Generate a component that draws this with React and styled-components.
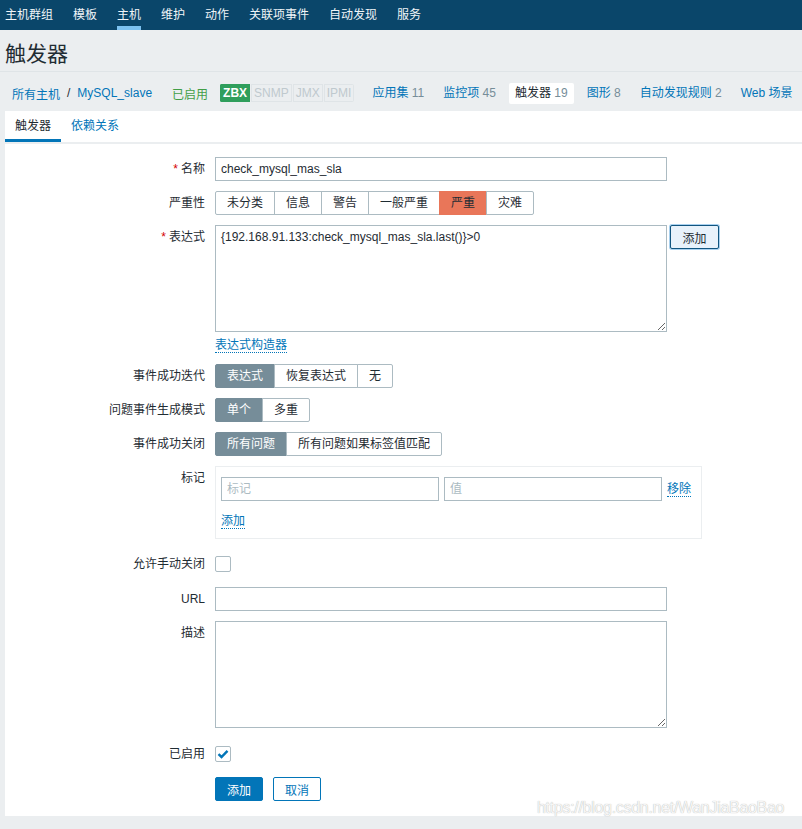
import React from "react";
import styled, { createGlobalStyle } from "styled-components";

const GlobalStyle = createGlobalStyle`
  html, body {
    margin: 0;
    padding: 0;
    background: #ebeef0;
  }
  body {
    font-family: "Liberation Sans", Arial, "Noto Sans CJK SC", sans-serif;
    font-size: 12px;
    color: #1f2c33;
  }
  * { box-sizing: border-box; }
`;

const Page = styled.div`
  position: relative;
  min-height: 829px;
  overflow: hidden;
`;

const TopNav = styled.nav`
  display: flex;
  gap: 20px;
  height: 30px;
  padding-left: 5px;
  background: #0a466a;
`;

const NavItem = styled.a`
  position: relative;
  line-height: 30px;
  color: #f0f5f8;
  font-size: 12px;
  white-space: nowrap;
  &::after {
    content: "";
    display: ${(p) => (p.$active ? "block" : "none")};
    position: absolute;
    left: 0;
    right: 0;
    bottom: 0;
    height: 4px;
    background: #7cc2f0;
  }
`;

const Header = styled.header`
  display: flex;
  align-items: center;
  height: 42px;
  padding: 2px 5px 0;
  border-bottom: 1px solid #dfe4e7;
`;

const Title = styled.h1`
  margin: 0;
  font-size: 21px;
  font-weight: normal;
  color: #1f2c33;
`;

const Breadcrumbs = styled.div`
  display: flex;
  align-items: center;
  height: 39px;
  padding: 3px 0 0 12px;
  white-space: nowrap;
  & > * {
    flex-shrink: 0;
  }
`;

const Crumb = styled.a`
  color: #0275b8;
`;

const Slash = styled.span`
  margin: 0 7px;
  color: #1f2c33;
`;

const StatusText = styled.span`
  margin-left: 20px;
  color: #429e47;
`;

const Badges = styled.div`
  display: flex;
  margin-left: 12px;
  margin-right: 5px;
  border-radius: 2px;
  overflow: hidden;
`;

const Badge = styled.span`
  height: 18px;
  line-height: 16px;
  padding: 0 2px;
  font-size: 12px;
  border: 1px solid ${(p) => (p.$on ? "#2f9e5c" : "#dfe4e7")};
  margin-left: ${(p) => (p.$first ? "0" : "1px")};
  background: ${(p) => (p.$on ? "#2f9e5c" : "#ebeef0")};
  color: ${(p) => (p.$on ? "#ffffff" : "#bfc9ce")};
  font-weight: ${(p) => (p.$on ? "bold" : "normal")};
`;

const HostTab = styled.a`
  margin-left: 7px;
  padding: 4px 6px;
  line-height: 13px;
  border-radius: 2px;
  color: #0275b8;
  background: ${(p) => (p.$active ? "#ffffff" : "transparent")};
  ${(p) => p.$active && "color: #1f2c33;"}
`;

const Count = styled.span`
  color: #768d99;
`;

const Panel = styled.section`
  margin-left: 5px;
  background: #ffffff;
  padding-bottom: 15px;
`;

const Tabs = styled.div`
  display: flex;
  border-bottom: 2px solid #ebeef0;
`;

const Tab = styled.a`
  padding: 0 10px;
  height: 31px;
  line-height: 30px;
  color: ${(p) => (p.$active ? "#1f2c33" : "#0275b8")};
  border-bottom: 3px solid ${(p) => (p.$active ? "#0275b8" : "transparent")};
`;

const Form = styled.div`
  padding-top: 13px;
`;

const Row = styled.div`
  display: grid;
  grid-template-columns: 210px 1fr;
  margin-bottom: ${(p) => p.$mb ?? 10}px;
`;

const Label = styled.div`
  text-align: right;
  padding-right: 10px;
  line-height: ${(p) => p.$lh ?? 24}px;
  color: #1f2c33;
  white-space: nowrap;
`;

const Req = styled.span`
  color: #d40000;
  margin-right: 3px;
`;

const Field = styled.div`
  display: flex;
  align-items: flex-start;
`;

const TextInput = styled.input`
  width: ${(p) => p.$w ?? 452}px;
  height: 24px;
  padding: 0 5px;
  border: 1px solid #acbbc2;
  border-radius: 0;
  font: inherit;
  color: #1f2c33;
  background: #fff;
  outline: none;
  &::placeholder {
    color: #acbbc2;
  }
`;

const TextArea = styled.textarea`
  width: 452px;
  height: 107px;
  padding: 4px 5px;
  border: 1px solid #acbbc2;
  font: inherit;
  color: #1f2c33;
  outline: none;
  resize: vertical;
  display: block;
`;

const Segments = styled.div`
  display: flex;
`;

const Segment = styled.span`
  height: 24px;
  line-height: 22px;
  padding: 0 11px;
  border: 1px solid ${(p) => (p.$bg ? p.$bg : "#acbbc2")};
  margin-left: ${(p) => (p.$first ? 0 : -1)}px;
  background: ${(p) => p.$bg ?? "#ffffff"};
  color: ${(p) => p.$fg ?? "#1f2c33"};
  border-radius: ${(p) =>
    p.$first ? "2px 0 0 2px" : p.$last ? "0 2px 2px 0" : "0"};
  white-space: nowrap;
`;

const SideButton = styled.button`
  margin-left: 3px;
  width: 49px;
  height: 24px;
  font: inherit;
  color: #1f2c33;
  background: #e8f2fb;
  border: 1px solid #11557f;
  border-radius: 2px;
  box-shadow: 0 0 0 1px #a9d1ef;
`;

const Link = styled.a`
  color: #0275b8;
  border-bottom: 1px dotted #0275b8;
  line-height: 14px;
`;

const LinkRow = styled.div`
  line-height: 16px;
`;

const TagBox = styled.div`
  width: 487px;
  border: 1px solid #ebeef0;
  padding: 10px 5px 9px 5px;
`;

const TagLine = styled.div`
  display: flex;
  align-items: center;
  gap: 5px;
`;

const TagAdd = styled.div`
  margin-top: 12px;
  line-height: 16px;
`;

const CheckBox = styled.span`
  display: flex;
  align-items: center;
  justify-content: center;
  width: 16px;
  height: 16px;
  border: 1px solid #acbbc2;
  border-radius: 2px;
  background: #fff;
`;

const CheckLabel = styled(Label)`
  line-height: 16px;
`;

const Buttons = styled.div`
  display: flex;
  gap: 10px;
`;

const Button = styled.button`
  width: 48px;
  height: 24px;
  font: inherit;
  border-radius: 2px;
  border: 1px solid #0275b8;
  background: ${(p) => (p.$primary ? "#0275b8" : "#ffffff")};
  color: ${(p) => (p.$primary ? "#ffffff" : "#0275b8")};
`;

const Watermark = styled.div`
  position: absolute;
  left: 537px;
  top: 799px;
  font-size: 16px;
  font-family: "Liberation Sans", Arial, sans-serif;
  color: #f6f6f6;
  text-shadow: 0 0 1px rgba(0, 0, 0, 0.35);
  letter-spacing: -0.3px;
  pointer-events: none;
`;

const navItems = ["主机群组", "模板", "主机", "维护", "动作", "关联项事件", "自动发现", "服务"];

const severities = [
  { t: "未分类" },
  { t: "信息" },
  { t: "警告" },
  { t: "一般严重" },
  { t: "严重", bg: "#e97659" },
  { t: "灾难" },
];

function Check() {
  return (
    <svg width="12" height="10" viewBox="0 0 12 10">
      <path d="M1.5 5.2 L4.5 8 L10.5 1.8" fill="none" stroke="#0275b8" strokeWidth="2.4" />
    </svg>
  );
}

function SegGroup({ items, activeIndex, activeBg }) {
  return (
    <Segments>
      {items.map((it, i) => {
        const bg = it.bg ?? (i === activeIndex ? activeBg : undefined);
        const fg = i === activeIndex && activeBg ? "#ffffff" : undefined;
        return (
          <Segment key={it.t} $first={i === 0} $last={i === items.length - 1} $bg={bg} $fg={fg}>
            {it.t}
          </Segment>
        );
      })}
    </Segments>
  );
}

export default function App() {
  return (
    <Page>
      <GlobalStyle />
      <TopNav>
        {navItems.map((n) => (
          <NavItem key={n} $active={n === "主机"}>
            {n}
          </NavItem>
        ))}
      </TopNav>
      <Header>
        <Title>触发器</Title>
      </Header>
      <Breadcrumbs>
        <Crumb>所有主机</Crumb>
        <Slash>/</Slash>
        <Crumb>MySQL_slave</Crumb>
        <StatusText>已启用</StatusText>
        <Badges>
          <Badge $on $first>ZBX</Badge>
          <Badge>SNMP</Badge>
          <Badge>JMX</Badge>
          <Badge>IPMI</Badge>
        </Badges>
        <HostTab>应用集 <Count>11</Count></HostTab>
        <HostTab>监控项 <Count>45</Count></HostTab>
        <HostTab $active>触发器 <Count>19</Count></HostTab>
        <HostTab>图形 <Count>8</Count></HostTab>
        <HostTab>自动发现规则 <Count>2</Count></HostTab>
        <HostTab>Web 场景</HostTab>
      </Breadcrumbs>
      <Panel>
        <Tabs>
          <Tab $active>触发器</Tab>
          <Tab>依赖关系</Tab>
        </Tabs>
        <Form>
          <Row>
            <Label><Req>*</Req>名称</Label>
            <Field><TextInput defaultValue="check_mysql_mas_sla" /></Field>
          </Row>
          <Row>
            <Label>严重性</Label>
            <Field><SegGroup items={severities} activeIndex={-1} /></Field>
          </Row>
          <Row $mb={5}>
            <Label><Req>*</Req>表达式</Label>
            <Field>
              <TextArea defaultValue="{192.168.91.133:check_mysql_mas_sla.last()}>0" />
              <SideButton>添加</SideButton>
            </Field>
          </Row>
          <Row $mb={11}>
            <Label $lh={16} />
            <LinkRow><Link>表达式构造器</Link></LinkRow>
          </Row>
          <Row>
            <Label>事件成功迭代</Label>
            <Field>
              <SegGroup items={[{ t: "表达式" }, { t: "恢复表达式" }, { t: "无" }]} activeIndex={0} activeBg="#768d99" />
            </Field>
          </Row>
          <Row>
            <Label>问题事件生成模式</Label>
            <Field>
              <SegGroup items={[{ t: "单个" }, { t: "多重" }]} activeIndex={0} activeBg="#768d99" />
            </Field>
          </Row>
          <Row>
            <Label>事件成功关闭</Label>
            <Field>
              <SegGroup items={[{ t: "所有问题" }, { t: "所有问题如果标签值匹配" }]} activeIndex={0} activeBg="#768d99" />
            </Field>
          </Row>
          <Row $mb={17}>
            <Label>标记</Label>
            <TagBox>
              <TagLine>
                <TextInput $w={218} placeholder="标记" />
                <TextInput $w={218} placeholder="值" />
                <Link>移除</Link>
              </TagLine>
              <TagAdd><Link>添加</Link></TagAdd>
            </TagBox>
          </Row>
          <Row $mb={15}>
            <CheckLabel>允许手动关闭</CheckLabel>
            <Field><CheckBox /></Field>
          </Row>
          <Row>
            <Label>URL</Label>
            <Field><TextInput /></Field>
          </Row>
          <Row $mb={18}>
            <Label>描述</Label>
            <Field><TextArea /></Field>
          </Row>
          <Row $mb={15}>
            <CheckLabel>已启用</CheckLabel>
            <Field><CheckBox><Check /></CheckBox></Field>
          </Row>
          <Row $mb={0}>
            <Label />
            <Buttons>
              <Button $primary>添加</Button>
              <Button>取消</Button>
            </Buttons>
          </Row>
        </Form>
      </Panel>
      <Watermark>https://blog.csdn.net/WanJiaBaoBao</Watermark>
    </Page>
  );
}
